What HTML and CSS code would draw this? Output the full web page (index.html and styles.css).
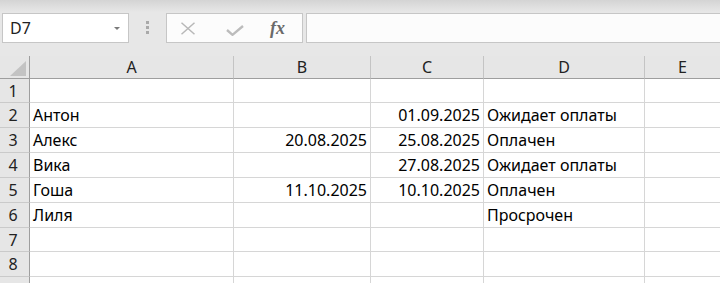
FILE: index.html
```html
<!DOCTYPE html>
<html>
<head>
    <title>Лист1</title>
    <link rel="stylesheet" href="styles.css">
</head>
<body>

<div class="formula-bar">
    <div class="name-box">
        <span>D7</span>
        <span class="caret"></span>
    </div>
    <div class="grip"><i></i><i></i><i></i></div>
    <div class="fx-buttons">
        <svg class="ico-cancel" width="16" height="13" viewBox="0 0 16 13">
            <path d="M1.5 0.8 L14.5 12.2 M14.5 0.8 L1.5 12.2" stroke="#b8b8b8" stroke-width="1.5" fill="none"/>
        </svg>
        <svg class="ico-enter" width="18" height="11" viewBox="0 0 18 11">
            <path d="M1 5 L6.5 9.8 L17 1" stroke="#bcbcbc" stroke-width="2.4" fill="none"/>
        </svg>
        <span class="fx">fx</span>
    </div>
    <div class="formula-input"></div>
</div>

<div class="sheet">
    <!-- заголовки столбцов -->
    <div class="corner"><span class="corner-tri"></span></div>
    <div class="ch">A</div>
    <div class="ch">B</div>
    <div class="ch">C</div>
    <div class="ch">D</div>
    <div class="ch last">E</div>

    <div class="rh">1</div>
    <div class="c"></div><div class="c"></div><div class="c"></div><div class="c"></div><div class="c last"></div>

    <div class="rh">2</div>
    <div class="c">Антон</div>
    <div class="c"></div>
    <div class="c num">01.09.2025</div>
    <div class="c">Ожидает оплаты</div>
    <div class="c last"></div>

    <div class="rh">3</div>
    <div class="c">Алекс</div>
    <div class="c num">20.08.2025</div>
    <div class="c num">25.08.2025</div>
    <div class="c">Оплачен</div>
    <div class="c last"></div>

    <div class="rh">4</div>
    <div class="c">Вика</div>
    <div class="c"></div>
    <div class="c num">27.08.2025</div>
    <div class="c">Ожидает оплаты</div>
    <div class="c last"></div>

    <div class="rh">5</div>
    <div class="c">Гоша</div>
    <div class="c num">11.10.2025</div>
    <div class="c num">10.10.2025</div>
    <div class="c">Оплачен</div>
    <div class="c last"></div>

    <div class="rh">6</div>
    <div class="c">Лиля</div>
    <div class="c"></div>
    <div class="c"></div>
    <div class="c">Просрочен</div>
    <div class="c last"></div>

    <div class="rh">7</div>
    <div class="c"></div><div class="c"></div><div class="c"></div><div class="c"></div><div class="c last"></div>

    <div class="rh">8</div>
    <div class="c"></div><div class="c"></div><div class="c"></div><div class="c"></div><div class="c last"></div>

    <div class="rh"></div>
    <div class="c"></div><div class="c"></div><div class="c"></div><div class="c"></div><div class="c last"></div>
</div>

</body>
</html>
```

FILE: styles.css
```css
* {
    box-sizing: border-box;
}

html, body {
    margin: 0;
    height: 100%;
    overflow: hidden;
}

body {
    font-family: "Noto Sans", "Open Sans", sans-serif;
    font-size: 16px;
    color: #000;
    background: #fff;
}

/* строка формул */
.formula-bar {
    display: flex;
    align-items: flex-start;
    height: 56px;
    padding: 13px 0 0 2px;
    background: linear-gradient(#d4d4d4, #e7e7e7 12px, #e7e7e7);
}

.name-box {
    display: flex;
    align-items: center;
    width: 127px;
    height: 30px;
    padding-left: 7px;
    border: 1px solid #c6c6c6;
    background: #fff;
    font-size: 16px;
    color: #222;
}

.caret {
    margin-left: auto;
    margin-right: 8px;
    border-left: 3px solid transparent;
    border-right: 3px solid transparent;
    border-top: 3px solid #7a7a7a;
}

.grip {
    display: flex;
    flex-direction: column;
    gap: 2px;
    margin-left: 17px;
    padding-top: 8px;
}

.grip i {
    display: block;
    width: 3px;
    height: 3px;
    background: #a9a9a9;
}

.fx-buttons {
    display: flex;
    align-items: center;
    width: 137px;
    height: 30px;
    margin-left: 17px;
    border: 1px solid #c6c6c6;
    background: #fcfcfc;
}

.ico-cancel {
    margin-left: 13px;
    margin-top: 1px;
}

.ico-enter {
    margin-left: 30px;
    margin-top: 5px;
}

.fx {
    margin-left: 26px;
    font-family: "Liberation Serif", "DejaVu Serif", serif;
    font-style: italic;
    font-weight: bold;
    font-size: 18px;
    color: #6a6a6a;
}

.formula-input {
    flex: 1;
    height: 30px;
    margin-left: 3px;
    border: 1px solid #c6c6c6;
    border-right: none;
    background: #fcfcfc;
}

/* лист */
.sheet {
    display: grid;
    grid-template-columns: 30px 204px 137px 113px 161px 1fr;
    grid-template-rows: 23px 24px 25px 25px 25px 25px 25px 24px 25px 25px;
}

.corner, .ch, .rh {
    background: #e6e6e6;
    color: #222;
}

.corner {
    position: relative;
    border-right: 1px solid #9e9e9e;
    border-bottom: 1px solid #9e9e9e;
}

.corner-tri {
    position: absolute;
    right: 3px;
    bottom: 2px;
    width: 0;
    height: 0;
    border-left: 16px solid transparent;
    border-bottom: 15px solid #c3c3c3;
}

.ch {
    display: flex;
    align-items: center;
    justify-content: center;
    border-right: 1px solid #c4c4c4;
    border-bottom: 1px solid #9e9e9e;
}

.rh {
    display: flex;
    align-items: center;
    justify-content: center;
    padding-right: 3px;
    border-right: 1px solid #9e9e9e;
    border-bottom: 1px solid #cacaca;
}

.c {
    display: flex;
    align-items: center;
    padding: 0 3px;
    white-space: nowrap;
    border-right: 1px solid #d6d6d6;
    border-bottom: 1px solid #d6d6d6;
}

.num {
    justify-content: flex-end;
}

.last {
    border-right: none;
}
```
